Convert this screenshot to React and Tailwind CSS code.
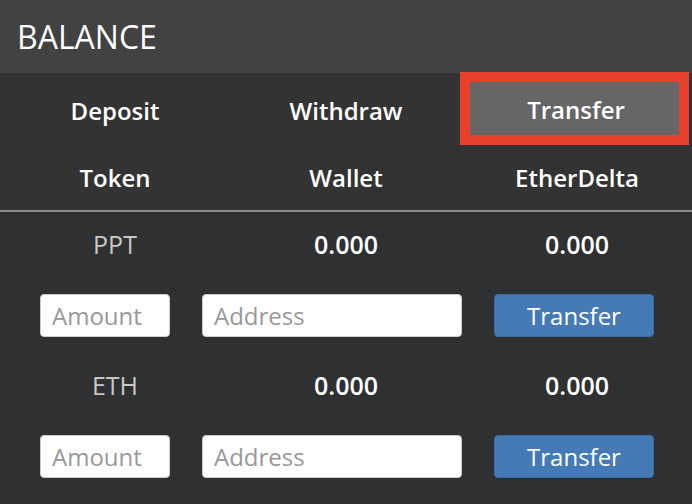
import React from "react";

function Row({ token }) {
  return (
    <div>
      <div className="flex h-[66px] items-center">
        <div className="w-[230px] text-center text-[25px] text-[#c8c8c8]">{token}</div>
        <div className="w-[232px] text-center text-[25px] font-semibold text-white">0.000</div>
        <div className="w-[230px] text-center text-[25px] font-semibold text-white">0.000</div>
      </div>
      <div className="mt-[16px] flex h-[43px] gap-[32px] pl-[40px]">
        <input
          placeholder="Amount"
          className="h-[43px] w-[130px] rounded-[4px] border border-[#cccccc] bg-white px-[11px] text-[24px] text-[#333] placeholder:text-[#999999] outline-none"
        />
        <input
          placeholder="Address"
          className="h-[43px] w-[260px] rounded-[4px] border border-[#cccccc] bg-white px-[11px] text-[24px] text-[#333] placeholder:text-[#999999] outline-none"
        />
        <button className="h-[43px] w-[160px] rounded-[4px] border border-[#3a6ca3] bg-[#457ab6] text-[24px] leading-none text-white">
          Transfer
        </button>
      </div>
      <div className="h-[16px]" />
    </div>
  );
}

export default function App() {
  return (
    <div className="h-[504px] w-[692px] overflow-hidden bg-[#2e3032] font-['Open_Sans',sans-serif]">
      <div className="flex h-[73px] items-center bg-[#424242] pl-[17px] text-[32px] leading-none text-white">
        BALANCE
      </div>
      <div className="bg-[#333333]">
        <div className="flex h-[72px] items-center">
          <div className="w-[230px] pt-[3px] text-center text-[24px] font-semibold text-white">Deposit</div>
          <div className="w-[232px] pt-[3px] text-center text-[24px] font-semibold text-white">Withdraw</div>
          <div className="-ml-[2px] -mt-[2px] flex h-[73px] w-[229px] items-center justify-center border-[10px] border-[#e8402a] bg-[#666666] pl-[3px] pt-[3px] text-[24px] font-semibold text-white">
            Transfer
          </div>
        </div>
        <div className="flex h-[65px] items-center">
          <div className="w-[230px] text-center text-[24px] font-semibold text-white">Token</div>
          <div className="w-[232px] text-center text-[24px] font-semibold text-white">Wallet</div>
          <div className="w-[230px] text-center text-[24px] font-semibold text-white">EtherDelta</div>
        </div>
      </div>
      <div className="h-[2px] bg-[#8a8a8a]" />
      <Row token="PPT" />
      <Row token="ETH" />
    </div>
  );
}
